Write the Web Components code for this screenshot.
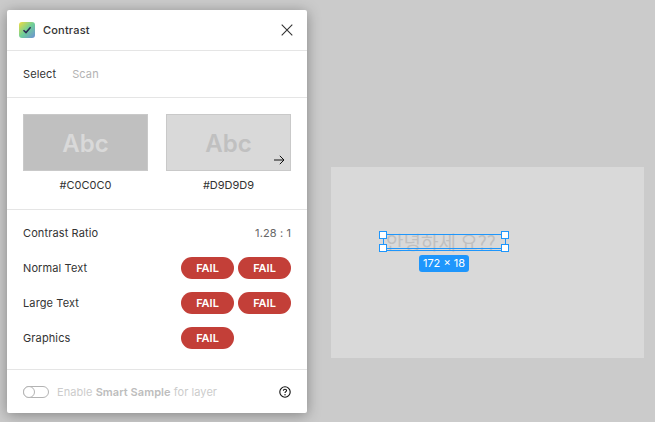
<!DOCTYPE html>
<html>
<head>
<meta charset="utf-8">
<style>
  html, body { margin: 0; height: 100%; }
  body { background: #cbcbcb; width: 655px; height: 422px; overflow: hidden; font-family: Inter, "Noto Sans CJK KR", sans-serif; }
  figma-stage { height: 100%; }
</style>
</head>
<body>
<figma-stage>
  <contrast-panel slot="panel"></contrast-panel>
  <canvas-frame slot="canvas"></canvas-frame>
</figma-stage>

<script>
class FigmaStage extends HTMLElement {
  constructor() {
    super();
    this.attachShadow({ mode: 'open' });
    this.shadowRoot.innerHTML = `
      <style>
        :host { display: flex; align-items: flex-start; padding: 10px 11px 0 7px; gap: 24px; box-sizing: border-box; }
      </style>
      <slot name="panel"></slot>
      <slot name="canvas"></slot>
    `;
  }
}
customElements.define('figma-stage', FigmaStage);

class FailBadge extends HTMLElement {
  constructor() {
    super();
    this.attachShadow({ mode: 'open' });
    this.shadowRoot.innerHTML = `
      <style>
        :host {
          display: flex; align-items: center; justify-content: center;
          width: 53px; height: 22px; border-radius: 11px; letter-spacing: 0;
          background: #c33f38; color: #fff; font-size: 11px; font-weight: 600; line-height: 22px;
        }
      </style>
      <slot></slot>
    `;
  }
}
customElements.define('fail-badge', FailBadge);

class ResultRow extends HTMLElement {
  constructor() {
    super();
    this.attachShadow({ mode: 'open' });
    this.shadowRoot.innerHTML = `
      <style>
        :host { display: flex; align-items: center; justify-content: space-between; height: 22px; font-size: 11px; color: #333; }
        .badges { display: grid; grid-template-columns: 53px 53px; gap: 4px; }
      </style>
      <span>${this.getAttribute('label')}</span>
      <div class="badges"><slot></slot></div>
    `;
  }
}
customElements.define('result-row', ResultRow);

class ColorSwatch extends HTMLElement {
  constructor() {
    super();
    this.attachShadow({ mode: 'open' });
    const bg = this.getAttribute('bg');
    const fg = this.getAttribute('fg');
    this.shadowRoot.innerHTML = `
      <style>
        :host { display: flex; flex-direction: column; width: 125px; }
        .box {
          position: relative; height: 57px; box-sizing: border-box; border: 1px solid #c9c9c9; padding-top: 2px;
          display: flex; align-items: center; justify-content: center; letter-spacing: 0;
          background: ${bg}; color: ${fg}; font-size: 24px; font-weight: 600;
        }
        ::slotted(svg) { position: absolute; right: 5px; bottom: 4px; }
        .hex { margin-top: 7px; text-align: center; font-size: 11px; line-height: 14px; color: #333; letter-spacing: 0; }
      </style>
      <div class="box">Abc<slot></slot></div>
      <div class="hex">${this.getAttribute('hex')}</div>
    `;
  }
}
customElements.define('color-swatch', ColorSwatch);

class ContrastPanel extends HTMLElement {
  constructor() {
    super();
    this.attachShadow({ mode: 'open' });
    this.shadowRoot.innerHTML = `
      <style>
        :host {
          display: block; width: 300px; height: 403px; flex: none; background: #fff; border-radius: 2px;
          box-shadow: 0 2px 14px rgba(0,0,0,.35); font-size: 11px; color: #333; letter-spacing: .12px;
        }
        header { display: flex; align-items: center; height: 40px; padding: 0 14px 0 12px; border-bottom: 1px solid #e5e5e5; }
        .logo { width: 16px; height: 16px; margin-right: 8px; }
        .title { flex: 1; font-size: 11px; font-weight: 500; letter-spacing: .2px; }
        .tabs { display: flex; align-items: center; gap: 16px; height: 46px; padding: 0 16px; border-bottom: 1px solid #e5e5e5; }
        .tabs .off { color: #b3b3b3; }
        .swatches { display: flex; justify-content: space-between; height: 95px; padding: 16px 16px 0; border-bottom: 1px solid #e5e5e5; }
        .results { height: 160px; box-sizing: border-box; padding: 12px 16px 0; border-bottom: 1px solid #e5e5e5; display: flex; flex-direction: column; gap: 13px; }
        .ratio { display: flex; justify-content: space-between; align-items: center; height: 22px; }
        .ratio b { font-weight: 400; color: #666; }
        footer { display: flex; align-items: center; height: 43px; padding: 0 16px; color: #ccc; letter-spacing: .06px; }
        .toggle { width: 26px; height: 12px; box-sizing: border-box; border: 1px solid #b3b3b3; border-radius: 6px; margin-right: 8px; position: relative; }
        .toggle::before { content: ''; position: absolute; left: -1px; top: -1px; width: 12px; height: 12px; box-sizing: border-box; border: 1px solid #b3b3b3; border-radius: 50%; background: #fff; }
        footer span { flex: 1; }
        footer strong { font-weight: 600; color: #bdbdbd; }
        .help { width: 12px; height: 12px; }
      </style>
      <header>
        <svg class="logo" viewBox="0 0 16 16">
          <defs><linearGradient id="g" x1="0" y1="0" x2="1" y2="1">
            <stop offset="0" stop-color="#f2dc3f"/><stop offset=".5" stop-color="#6fcf97"/><stop offset="1" stop-color="#6d8fd6"/>
          </linearGradient></defs>
          <rect width="16" height="16" rx="3" fill="url(#g)"/>
          <path d="M4.5 8.2 7 10.6 11.6 5.2" fill="none" stroke="#2c2c54" stroke-width="1.5"/>
        </svg>
        <div class="title">Contrast</div>
        <svg width="12" height="12" viewBox="0 0 12 12"><path d="M.7.7 11.3 11.3M11.3.7.7 11.3" stroke="#333" stroke-width="1.1" fill="none"/></svg>
      </header>
      <div class="tabs"><span>Select</span><span class="off">Scan</span></div>
      <div class="swatches">
        <color-swatch bg="#c0c0c0" fg="#d9d9d9" hex="#C0C0C0"></color-swatch>
        <color-swatch bg="#d9d9d9" fg="#c0c0c0" hex="#D9D9D9">
          <svg width="12" height="12" viewBox="0 0 12 12"><path d="M1 6H11M6.8 1.8 11 6 6.8 10.2" stroke="#111" stroke-width="1" fill="none"/></svg>
        </color-swatch>
      </div>
      <div class="results">
        <div class="ratio"><span>Contrast Ratio</span><b>1.28 : 1</b></div>
        <result-row label="Normal Text"><fail-badge>FAIL</fail-badge><fail-badge>FAIL</fail-badge></result-row>
        <result-row label="Large Text"><fail-badge>FAIL</fail-badge><fail-badge>FAIL</fail-badge></result-row>
        <result-row label="Graphics"><fail-badge>FAIL</fail-badge></result-row>
      </div>
      <footer>
        <div class="toggle"></div>
        <span>Enable <strong>Smart Sample</strong> for layer</span>
        <svg class="help" viewBox="0 0 12 12"><circle cx="6" cy="6" r="5.2" fill="none" stroke="#111" stroke-width="1.1"/><path d="M4.4 4.8C4.4 3.8 5.1 3.2 6 3.2S7.6 3.8 7.6 4.6C7.6 5.6 6 5.8 6 7" fill="none" stroke="#111" stroke-width="1.1"/><circle cx="6" cy="8.7" r=".7" fill="#111"/></svg>
      </footer>
    `;
  }
}
customElements.define('contrast-panel', ContrastPanel);

class CanvasFrame extends HTMLElement {
  constructor() {
    super();
    this.attachShadow({ mode: 'open' });
    this.shadowRoot.innerHTML = `
      <style>
        :host { display: block; position: relative; width: 313px; height: 191px; flex: none; margin-top: 157px; background: #d9d9d9; }
        .text { position: absolute; left: 55px; top: 65px; white-space: nowrap; font: 19px/20px "Noto Sans CJK KR", sans-serif; color: #c0c0c0; }
        .sel { position: absolute; left: 52px; top: 67px; width: 121px; height: 15px; border: 1px solid #1e96fc; border-bottom: 0; }
        .line { position: absolute; left: 52px; width: 123px; height: 1px; background: #1e96fc; }
        .h { position: absolute; width: 6px; height: 6px; background: #fff; border: 1px solid #1e96fc; }
        .dim { position: absolute; left: 88px; top: 88px; width: 50px; height: 17px; border-radius: 3px; background: #1e96fc; color: #fff; font-size: 11px; line-height: 17px; text-align: center; }
      </style>
      <div class="text">안녕하세 요??</div>
      <div class="sel"></div>
      <div class="line" style="top:81px"></div><div class="line" style="top:83px"></div>
      <i class="h" style="left:48px;top:64px"></i><i class="h" style="left:170px;top:64px"></i>
      <i class="h" style="left:48px;top:77px"></i><i class="h" style="left:170px;top:77px"></i>
      <div class="dim">172 × 18</div>
    `;
  }
}
customElements.define('canvas-frame', CanvasFrame);
</script>
</body>
</html>
